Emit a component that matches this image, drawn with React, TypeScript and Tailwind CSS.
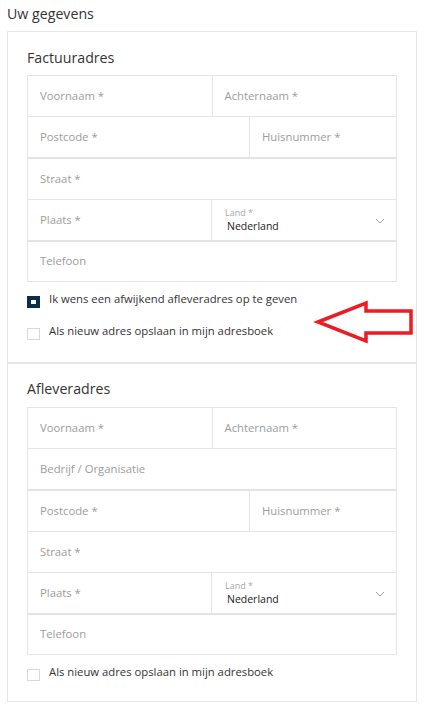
import React from "react";

const font = { fontFamily: '"Open Sans", "Noto Sans", Arial, sans-serif' };

type Cell = { text: string; basis?: string; land?: boolean };
type Row = { cells: Cell[]; h: string; thick?: boolean };

function Field({ cell, last }: { cell: Cell; last: boolean }) {
  const border = last ? "" : "border-r border-[#e4e4e4]";
  if (cell.land) {
    return (
      <div className={`relative flex flex-col justify-center pl-[13px] ${cell.basis ?? "flex-1"} ${border}`}>
        <span className="text-[9px] leading-[12px] text-[#a8a8a8]">Land *</span>
        <span className="text-[10.5px] leading-[14px] text-[#222] pl-[2px]">Nederland</span>
        <svg className="absolute right-[11px] top-[18px]" width="10" height="6" viewBox="0 0 10 6">
          <path d="M1 1 L5 5 L9 1" fill="none" stroke="#a0a0a0" strokeWidth="1" />
        </svg>
      </div>
    );
  }
  return (
    <div className={`flex items-center pl-[12px] text-[11.3px] text-[#9c9c9c] ${cell.basis ?? "flex-1"} ${border}`}>
      {cell.text}
    </div>
  );
}

function Grid({ rows }: { rows: Row[] }) {
  return (
    <div className="border-t border-x border-[#e4e4e4]">
      {rows.map((r, i) => (
        <div
          key={i}
          className={`flex ${r.h} ${r.thick ? "border-b-2" : "border-b"} border-[#e4e4e4]`}
        >
          {r.cells.map((c, j) => (
            <Field key={j} cell={c} last={j === r.cells.length - 1} />
          ))}
        </div>
      ))}
    </div>
  );
}

function Check({ checked, label, className }: { checked?: boolean; label: string; className: string }) {
  return (
    <div className={`flex items-start ${className}`}>
      {checked ? (
        <div className="mt-[5px] w-[13px] h-[12px] bg-[#0c2c48] flex items-center justify-center shrink-0">
          <div className="w-[5px] h-[4px] bg-white" />
        </div>
      ) : (
        <div className="mt-[5px] w-[13px] h-[12px] border border-[#d8d8d8] bg-white shrink-0" />
      )}
      <span className="ml-[9px] text-[11.3px] leading-[16px] text-[#333]">{label}</span>
    </div>
  );
}

export default function App() {
  const sec1: Row[] = [
    { cells: [{ text: "Voornaam *" }, { text: "Achternaam *" }], h: "h-[41px]" },
    { cells: [{ text: "Postcode *", basis: "w-[222px] shrink-0" }, { text: "Huisnummer *" }], h: "h-[42px]", thick: true },
    { cells: [{ text: "Straat *" }], h: "h-[41px]" },
    { cells: [{ text: "Plaats *" }, { text: "", land: true }], h: "h-[42px]", thick: true },
    { cells: [{ text: "Telefoon" }], h: "h-[40px]" },
  ];
  const sec2: Row[] = [
    { cells: [{ text: "Voornaam *" }, { text: "Achternaam *" }], h: "h-[41px]" },
    { cells: [{ text: "Bedrijf / Organisatie" }], h: "h-[42px]", thick: true },
    { cells: [{ text: "Postcode *", basis: "w-[222px] shrink-0" }, { text: "Huisnummer *" }], h: "h-[41px]" },
    { cells: [{ text: "Straat *" }], h: "h-[41px]" },
    { cells: [{ text: "Plaats *" }, { text: "", land: true }], h: "h-[42px]", thick: true },
    { cells: [{ text: "Telefoon" }], h: "h-[40px]" },
  ];
  return (
    <div className="relative w-[427px] h-[711px] bg-white overflow-hidden" style={font}>
      <div className="pl-[7px] pt-[3px] text-[14.2px] leading-[22px] text-[#333]">Uw gegevens</div>
      <div className="mt-[6px] ml-[7px] w-[410px] border border-[#e6e6e6]">
        <div className="px-[19px] pt-[15px] pb-[22px]">
          <div className="text-[14.2px] leading-[22px] text-[#333] mb-[6px]">Factuuradres</div>
          <Grid rows={sec1} />
          <Check checked label="Ik wens een afwijkend afleveradres op te geven" className="mt-[9px]" />
          <Check label="Als nieuw adres opslaan in mijn adresboek" className="mt-[15px]" />
        </div>
        <div className="h-[2px] bg-[#e6e6e6]" />
        <div className="px-[19px] pt-[14px] pb-[20px]">
          <div className="text-[14.2px] leading-[22px] text-[#333] mb-[7px]">Afleveradres</div>
          <Grid rows={sec2} />
          <Check label="Als nieuw adres opslaan in mijn adresboek" className="mt-[9px]" />
        </div>
      </div>
      <svg className="absolute left-0 top-0 pointer-events-none" width="427" height="711">
        <polygon
          points="318,322 366,303 366,311 411,311 411,333 366,333 366,341"
          fill="none"
          stroke="#ec1c24"
          strokeWidth="3.5"
          strokeLinejoin="miter"
        />
      </svg>
    </div>
  );
}
